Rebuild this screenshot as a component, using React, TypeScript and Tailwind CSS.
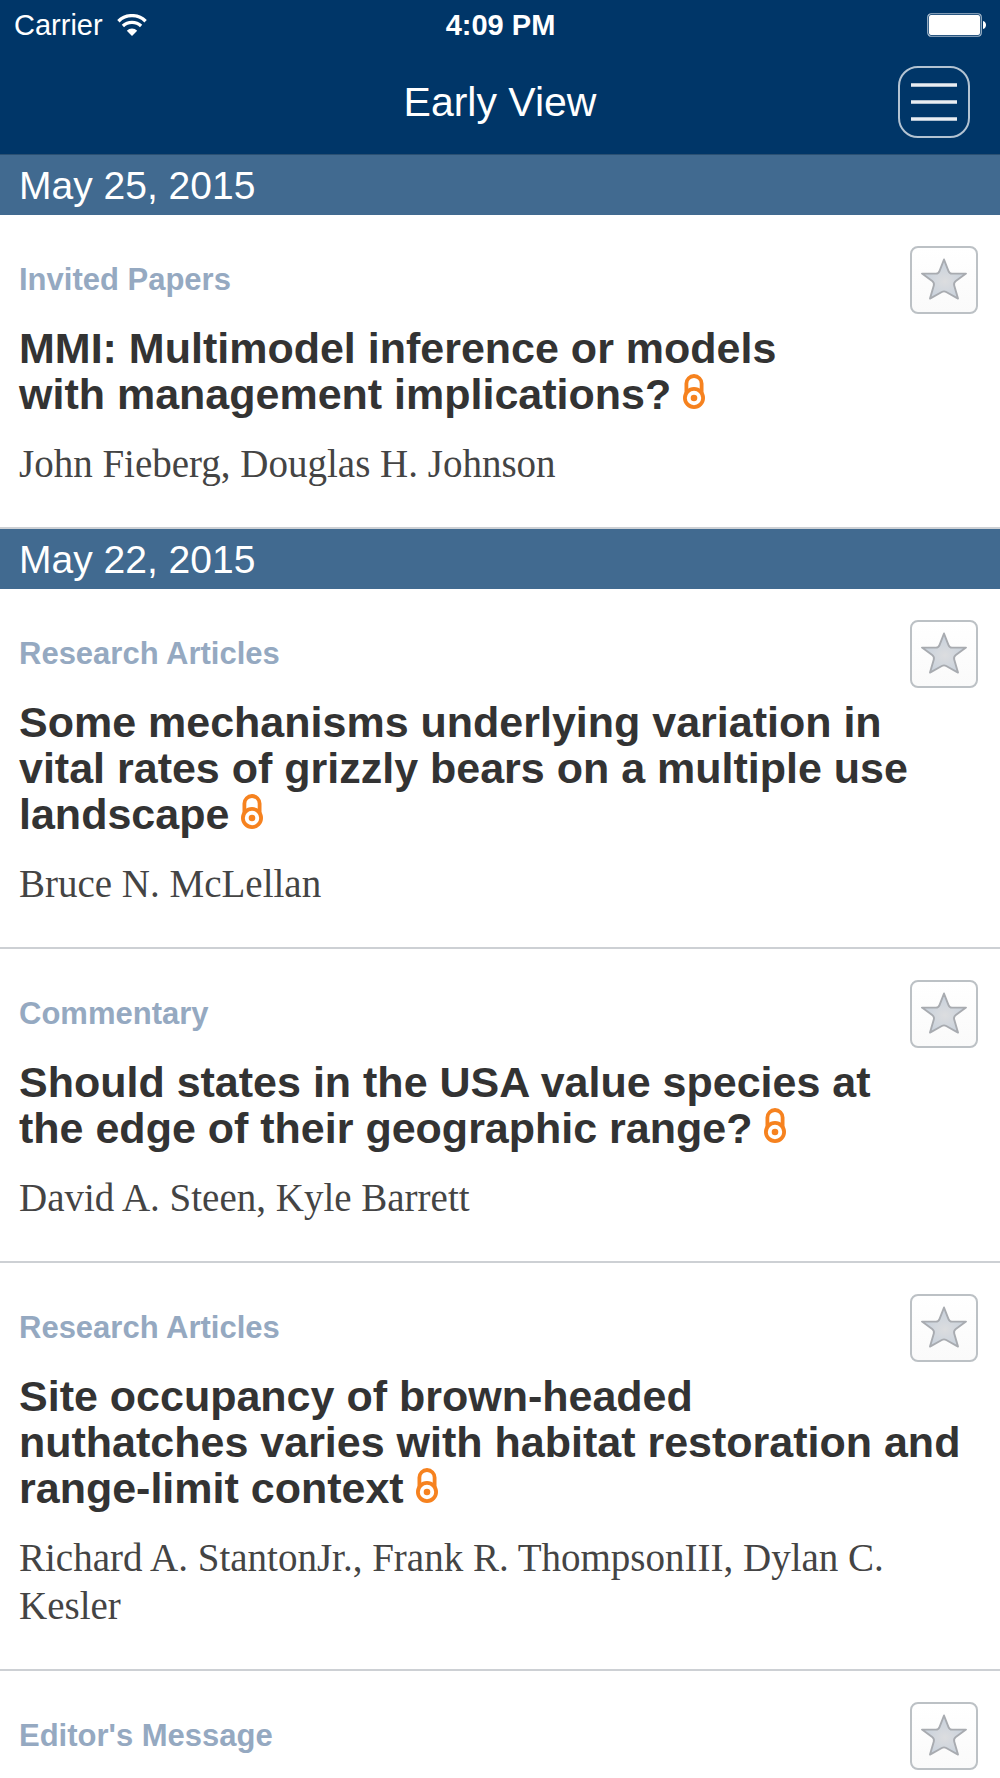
import { useState } from "react";

type Article = {
  id: number;
  category: string;
  title?: string;
  authors?: string;
};

type Section = {
  date: string;
  articles: Article[];
};

const sections: Section[] = [
  {
    date: "May 25, 2015",
    articles: [
      {
        id: 1,
        category: "Invited Papers",
        title: "MMI: Multimodel inference or models with\u00a0management implications?",
        authors: "John Fieberg, Douglas H. Johnson",
      },
    ],
  },
  {
    date: "May 22, 2015",
    articles: [
      {
        id: 2,
        category: "Research Articles",
        title: "Some mechanisms underlying variation in vital rates of grizzly bears on a multiple use landscape",
        authors: "Bruce N. McLellan",
      },
      {
        id: 3,
        category: "Commentary",
        title: "Should states in the USA value species at the edge of their geographic range?",
        authors: "David A. Steen, Kyle Barrett",
      },
      {
        id: 4,
        category: "Research Articles",
        title: "Site occupancy of brown-headed nuthatches varies with habitat restoration and range-limit context",
        authors: "Richard A. StantonJr., Frank R. ThompsonIII, Dylan C. Kesler",
      },
      { id: 5, category: "Editor's Message" },
    ],
  },
];

const WifiIcon = () => (
  <svg viewBox="0 0 30 23" className="w-[30px] h-[23px]" fill="none" stroke="white" aria-hidden="true">
    <path d="M1.4 7.2a19.4 19.4 0 0 1 27.2 0" strokeWidth="3.4" />
    <path d="M5.9 12a13 13 0 0 1 18.2 0" strokeWidth="3.2" />
    <path d="M15 22l-5.2-5.3a7.4 7.4 0 0 1 10.4 0z" fill="white" stroke="none" />
  </svg>
);

const BatteryIcon = () => (
  <svg viewBox="0 0 60 24" className="w-[60px] h-6" aria-hidden="true">
    <rect x="0.75" y="0.75" width="53.5" height="22.5" rx="3.5" fill="none" stroke="#a9bccd" strokeWidth="1.2" />
    <rect x="2" y="2" width="51" height="20" rx="2" fill="white" />
    <path d="M56 8c4 1 4 7 0 8z" fill="white" />
  </svg>
);

const OpenAccessIcon = () => (
  <svg
    viewBox="0 0 22 35"
    className="inline-block w-[22px] h-[35px] align-baseline"
    fill="none"
    stroke="#f6821f"
    strokeWidth="3.8"
    role="img"
    aria-label="Open access"
  >
    <circle cx="11" cy="24" r="9.1" />
    <circle cx="11" cy="24" r="3.3" fill="#f6821f" stroke="none" />
    <path d="M3.4 19V9.6a7.6 7.6 0 0 1 15.2 0V19" />
  </svg>
);

const StarIcon = () => (
  <svg viewBox="0 1 48 44" className="w-12 h-11" aria-hidden="true">
    <defs>
      <radialGradient id="starFill" cx="0.52" cy="0.56" r="0.5">
        <stop offset="0" stopColor="#dcdddf" />
        <stop offset="1" stopColor="#c8d1dc" />
      </radialGradient>
    </defs>
    <path
      d="M24 2.5L28.4 13.8Q29.5 16.6 32 16.6L46 16.6L35.8 24Q33.5 25.8 34.2 28.4L38 41.6L26.2 35Q24 33.8 21.8 35L10 41.6L13.8 28.4Q14.5 25.8 12.2 24L2 16.6L16 16.6Q18.5 16.6 19.6 13.8Z"
      fill="url(#starFill)"
      stroke="#a8abb0"
      strokeWidth="1.9"
      strokeLinejoin="round"
    />
  </svg>
);

const Header = () => (
  <header className="shrink-0 bg-[#003668] text-white border-b border-[#2a5073]">
    <div className="grid grid-cols-3 items-center h-[50px] pl-[14px] pr-[13px]">
      <div className="flex items-center gap-[14px] text-[29px] leading-8">
        Carrier
        <WifiIcon />
      </div>
      <div className="text-center text-[29px] leading-8 font-bold">4:09 PM</div>
      <div className="flex justify-end">
        <BatteryIcon />
      </div>
    </div>
    <div className="grid grid-cols-[1fr_auto_1fr] items-center h-[104px] px-[30px]">
      <h1 className="col-start-2 text-[41px] leading-[48px]">Early View</h1>
      <button
        aria-label="Open menu"
        className="justify-self-end flex items-center justify-center w-[72px] h-[72px] rounded-[20px] border-2 border-[#b3c3d2]"
      >
        <svg viewBox="0 0 46 38" className="w-[46px] h-[38px]" stroke="#e9edf2" strokeWidth="3.6" aria-hidden="true">
          <path d="M0 2h46M0 19h46M0 36h46" />
        </svg>
      </button>
    </div>
  </header>
);

const ArticleItem = ({ article }: { article: Article }) => {
  const [saved, setSaved] = useState(false);

  return (
    <li className="flow-root pt-[31px] pb-[39px] pl-[19px] pr-[22px] border-b-2 border-[#cdd0d4]">
      <button
        aria-label={`Save ${article.title ?? article.category}`}
        aria-pressed={saved}
        onClick={() => setSaved(!saved)}
        className="float-right flex items-center justify-center w-[68px] h-[68px] ml-6 mb-6 rounded-lg border-2 border-[#bcc1c5] bg-linear-to-b from-white to-[#fafafa]"
      >
        <StarIcon />
      </button>
      <p className="pt-[14px] text-[31px] leading-10 font-bold text-[#95a9c1]">{article.category}</p>
      {article.title && (
        <h3 className="mt-[25px] text-[43px] leading-[46px] font-bold text-[#333333]">
          {article.title} <OpenAccessIcon />
        </h3>
      )}
      {article.authors && (
        <p className="mt-[23px] font-['Liberation_Serif',serif] text-[39px] leading-[48px] text-[#444444]">
          {article.authors}
        </p>
      )}
    </li>
  );
};

const App = () => (
  <div className="flex flex-col h-screen bg-white font-['Liberation_Sans',Arial,sans-serif]">
    <Header />
    <main className="flex-1 overflow-y-auto [scrollbar-width:none]">
      {sections.map(({ date, articles }) => (
        <section key={date}>
          <h2 className="bg-[#416a90] text-white pt-[2px] pl-[19px] text-[39px] leading-[58px]">{date}</h2>
          <ul>
            {articles.map((article) => (
              <ArticleItem key={article.id} article={article} />
            ))}
          </ul>
        </section>
      ))}
    </main>
  </div>
);

export default App;
